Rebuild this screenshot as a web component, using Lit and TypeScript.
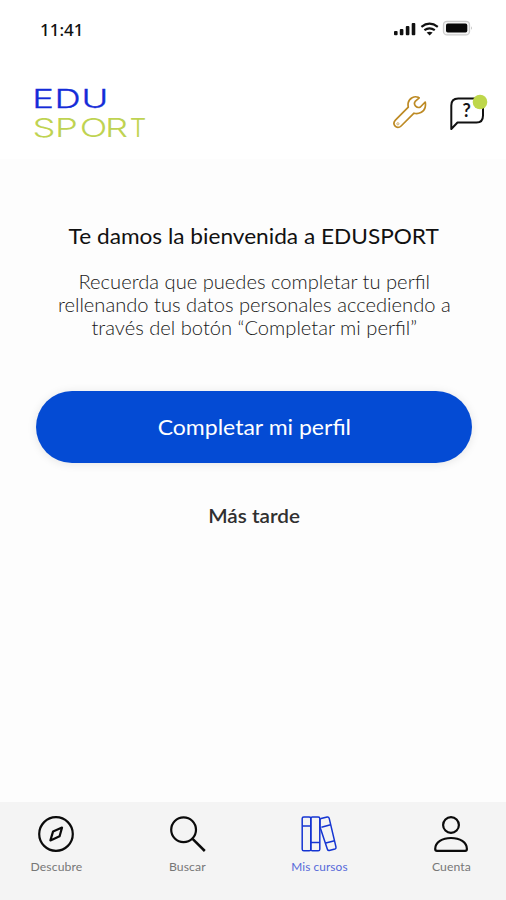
import { LitElement, html, svg, css } from "lit";
import { customElement, property } from "lit/decorators.js";

const icons = {
  compass: svg`<circle cx="20" cy="20" r="16.8"/><path d="M26 13.6 L23.6 22.3 L14.4 26.4 L17.1 17.4 Z"/>`,
  search: svg`<circle cx="15.6" cy="15.8" r="12.4"/><path d="M24.6 24.8 L36.8 37" stroke-width="2.5"/>`,
  books: svg`<g stroke-width="1.5"><rect x="3.2" y="3" width="8.6" height="33.8" rx="1.6"/><rect x="11.8" y="3" width="9" height="33.8" rx="1.6"/><path d="M3.2 12H11.8M11.8 28.6H20.8"/><path d="M22 4.6 L28.2 3.1 Q29.8 2.9 30.2 4.4 L37 33.2 Q37.2 34.6 36 35 L30.2 36.5 Q28.8 36.6 28.4 35.2 L21 13 V6 Q21 5 22 4.6ZM22.4 13.2 L31.6 10.8M26.8 29 L35.6 26.8"/></g>`,
  account: svg`<circle cx="20" cy="11" r="7.9"/><path d="M6 36.8 Q4.2 36.8 4.2 35 C4.2 28.2 11.5 24 20 24 C28.8 24 35.9 28.2 35.9 35 Q35.9 36.8 34.2 36.8 Z"/>`,
};

@customElement("nav-item")
class NavItem extends LitElement {
  @property() icon: keyof typeof icons = "compass";
  @property() label = "";
  @property({ type: Boolean, reflect: true }) active = false;

  static styles = css`
    :host { display: flex; flex-direction: column; align-items: center; width: 80px; color: #0b0b0b; }
    :host([active]) { color: #1434d2; }
    svg { width: 40px; height: 40px; fill: none; stroke: currentColor; stroke-width: 2.2; stroke-linejoin: round; }
    .label { font: 400 11.5px/16px Lato, sans-serif; letter-spacing: 0.1px; color: #777; white-space: nowrap; margin-top: 5px; transform: scaleX(1.06); }
    :host([active]) .label { color: #5669d9; transform: scaleX(1.03); }
  `;

  render() {
    return html`<svg viewBox="0 0 40 40">${icons[this.icon]}</svg><span class="label">${this.label}</span>`;
  }
}

@customElement("app-root")
class AppRoot extends LitElement {
  static styles = css`
    :host { display: flex; flex-direction: column; width: 506px; height: 900px; overflow: hidden; background: #fdfdfd; font-family: Lato, sans-serif; color: #111; }
    header { height: 159px; background: #fff; box-sizing: border-box; }
    .status { height: 60px; padding: 0 34px 0 40px; display: flex; align-items: center; justify-content: space-between; box-sizing: border-box; }
    .time { font: 500 17px/20px "Noto Sans", sans-serif; color: #111; margin-top: -1px; }
    .signals { width: 80px; height: 20px; margin-top: -2px; }
    .brandbar { display: flex; justify-content: space-between; padding: 22px 16px 0 32px; }
    .logo { width: 120px; height: 62px; }
    .logo text { font-family: Inter, sans-serif; font-weight: 300; font-size: 26px; }
    .edu { fill: #142bd8; stroke: #142bd8; stroke-width: .3; }
    .sport { fill: #bfd352; }
    .actions { width: 98px; height: 50px; margin-top: 6px; }
    .actions text { font: 700 18px Lato, sans-serif; fill: #161616; }
    main { flex: 1; display: flex; flex-direction: column; align-items: center; padding-left: 2px; }
    h1 { margin: 63px 0 0; font-weight: 400; font-size: 21px; line-height: 28px; white-space: nowrap; transform: scaleX(1.078); }
    p { margin: 20px 0 0; text-align: center; font-weight: 300; font-size: 19px; line-height: 23px; color: #181818; transform: scaleX(1.06); }
    p span { display: block; white-space: nowrap; }
    button { border: 0; padding: 0; font-family: inherit; }
    button span { display: inline-block; }
    .primary { width: 436px; height: 72px; margin: 52px 0 0; border-radius: 36px; background: #044bd4; color: #fff; font-size: 21.5px; box-shadow: 0 1px 10px rgba(0,0,0,.1); }
    .primary span { transform: scaleX(1.07); }
    .later { margin-top: 39px; background: none; color: #303030; font-weight: 600; font-size: 19px; line-height: 28px; }
    .later span { transform: scaleX(1.09); }
    nav { height: 98px; box-sizing: border-box; padding: 12px 15px 0 16px; background: #f4f4f4; display: flex; justify-content: space-between; }
  `;

  render() {
    return html`
      <header>
        <div class="status">
          <span class="time">11:41</span>
          <svg class="signals" viewBox="0 0 80 20">
            <g fill="#111">
              <rect x="2" y="12" width="3.6" height="4.2" rx="1"/><rect x="7.8" y="10" width="3.6" height="6.2" rx="1"/>
              <rect x="13.8" y="7" width="3.6" height="9.2" rx="1"/><rect x="19.7" y="4" width="3.6" height="12.2" rx="1"/>
            </g>
            <g fill="none" stroke="#111" stroke-width="2.2"><path d="M29.4 7.8Q37.5 1.5 45.8 7.8"/><path d="M32.4 11.2Q37.5 7.4 42.8 11.2"/></g>
            <path d="M34.6 13.6Q37.6 11.8 40.6 13.6L37.6 16.4Z" fill="#111"/>
            <rect x="51.5" y="2.3" width="26" height="13.6" rx="3.5" fill="#f4f4f4" stroke="#ccc" stroke-width="1.3"/>
            <rect x="54" y="4.6" width="21.3" height="9" rx="1.8" fill="#080808"/>
            <path d="M79 7.2Q80.4 9 79 10.8Z" fill="#aaa"/>
          </svg>
        </div>
        <div class="brandbar">
          <svg class="logo" viewBox="0 0 120 62">
            <g transform="scale(1.4 1)">
              <text class="edu" x="0.2 16 35.3" y="26.2">EDU</text>
            </g>
            <g transform="scale(1.4 1)">
              <text class="sport" x="0.3 16.5 34.2 52.2" y="55.2">SPOR</text>
            </g>
            <text class="sport" x="97.8" y="55.2">T</text>
          </svg>
          <svg class="actions" viewBox="0 0 98 50">
            <path d="M26.2 9.3C22.5 7.7 17 10 16.2 14.8C15.8 17 16.2 18.5 16.3 19.2L3.4 32.2C-.4 36.2 4.7 42.2 9.1 38L22 25.2C26.5 26.7 32 24 33.1 19.5C33.7 17 33.5 15.3 33.2 14L28.4 19Q25.8 20.3 23.6 18.2Q21.5 15.8 23.2 13.4L27.2 9.9Z" fill="none" stroke="#bd8a24" stroke-width="1.7" stroke-linejoin="round"/>
            <circle cx="5.9" cy="35.8" r="1.1" fill="none" stroke="#d3b16c" stroke-width="1"/>
            <path d="M59.3 41V17.5Q59.3 10.5 66.2 10.5H84.5Q91 10.5 91 17V27.5Q91 34.5 84.5 34.5H65.5Z" fill="none" stroke="#111" stroke-width="2" stroke-linejoin="round"/>
            <text x="70.4" y="29.2">?</text>
            <circle cx="88" cy="14" r="7.3" fill="#bed74b"/>
          </svg>
        </div>
      </header>
      <main>
        <h1>Te damos la bienvenida a EDUSPORT</h1>
        <p><span>Recuerda que puedes completar tu perfil</span><span>rellenando tus datos personales accediendo a</span><span>través del botón “Completar mi perfil”</span></p>
        <button class="primary"><span>Completar mi perfil</span></button>
        <button class="later"><span>Más tarde</span></button>
      </main>
      <nav>
        <nav-item icon="compass" label="Descubre"></nav-item>
        <nav-item icon="search" label="Buscar"></nav-item>
        <nav-item icon="books" label="Mis cursos" active></nav-item>
        <nav-item icon="account" label="Cuenta"></nav-item>
      </nav>
    `;
  }
}
